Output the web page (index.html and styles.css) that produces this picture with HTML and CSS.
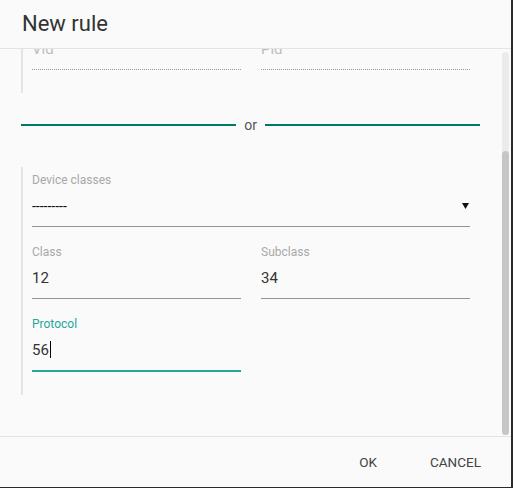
FILE: index.html
```html
<!DOCTYPE html>
<html lang="en">
<head>
  <meta charset="UTF-8">
  <meta name="viewport" content="width=device-width, initial-scale=1.0">
  <title>New rule</title>
  <link rel="stylesheet" href="styles.css">
</head>
<body>

  <div class="dialog">
    <h2 class="dialog-title">New rule</h2>

    <div class="dialog-content">
      <div class="dialog-body" id="dialogBody">
        <!-- Vendor / product -->
        <div class="rule-group">
          <div class="field">
            <label class="field-label">Device</label>
            <div class="select">
              <span>---------</span>
              <svg class="select-arrow" width="7" height="6" viewBox="0 0 7 6"><polygon points="0,0 7,0 3.5,6" fill="#111"/></svg>
            </div>
          </div>
          <div class="field-row">
            <div class="field disabled">
              <label class="field-label"></label>
              <input class="field-input" type="text" placeholder="Vid" disabled>
            </div>
            <div class="field disabled">
              <label class="field-label"></label>
              <input class="field-input" type="text" placeholder="Pid" disabled>
            </div>
          </div>
        </div>

        <div class="divider"><span>or</span></div>

        <!-- Device classes -->
        <div class="rule-group">
          <div class="field">
            <label class="field-label">Device classes</label>
            <div class="select">
              <span>---------</span>
              <svg class="select-arrow" width="7" height="6" viewBox="0 0 7 6"><polygon points="0,0 7,0 3.5,6" fill="#111"/></svg>
            </div>
          </div>
          <div class="field-row">
            <div class="field">
              <label class="field-label" for="cls">Class</label>
              <input class="field-input" id="cls" type="text" value="12">
            </div>
            <div class="field">
              <label class="field-label" for="subcls">Subclass</label>
              <input class="field-input" id="subcls" type="text" value="34">
            </div>
          </div>
          <div class="field-row">
            <div class="field focused">
              <label class="field-label">Protocol</label>
              <div class="field-input">56<span class="caret"></span></div>
            </div>
          </div>
        </div>
      </div>

      <div class="scrollbar">
        <div class="scrollbar-track" id="track">
          <div class="scrollbar-thumb" id="thumb"></div>
        </div>
      </div>
    </div>

    <div class="dialog-actions">
      <button class="text-btn">OK</button>
      <button class="text-btn">CANCEL</button>
    </div>
  </div>

  <script>
    document.addEventListener('DOMContentLoaded', () => {
      const body = document.getElementById('dialogBody');
      const track = document.getElementById('track');
      const thumb = document.getElementById('thumb');

      function updateThumb() {
        const trackHeight = track.clientHeight;
        thumb.style.height = (body.clientHeight / body.scrollHeight * trackHeight) + 'px';
        thumb.style.top = (body.scrollTop / body.scrollHeight * trackHeight) + 'px';
      }

      body.addEventListener('scroll', updateThumb);

      // keep the form scrolled to the bottom
      body.scrollTop = body.scrollHeight;
      updateThumb();
    });
  </script>
</body>
</html>
```

FILE: styles.css
```css
/* General Styles */
body {
  font-family: Roboto, "Liberation Sans", sans-serif;
  margin: 0;
  padding: 0;
  background-color: #2b2b2b;
  color: #333;
}

.dialog {
  width: 511px;
  height: 487px;
  background: #fafafa;
  display: flex;
  flex-direction: column;
}

.dialog-title {
  margin: 0;
  height: 48px;
  line-height: 48px;
  padding-left: 22px;
  font-size: 22px;
  font-weight: 400;
  color: #333;
  border-bottom: 1px solid #e3e3e3;
  flex-shrink: 0;
}

.dialog-content {
  display: flex;
  height: 387px;
  flex-shrink: 0;
}

.dialog-body {
  flex: 1;
  overflow-y: auto;
  scrollbar-width: none;
  padding: 24px 21px 41px 21px;
  box-sizing: border-box;
}

/* Scrollbar */
.scrollbar {
  width: 10px;
  padding: 3px 2px 1px 1px;
  box-sizing: border-box;
  flex-shrink: 0;
}

.scrollbar-track {
  position: relative;
  height: 100%;
  background: #ebebeb;
  border-radius: 4px;
}

.scrollbar-thumb {
  position: absolute;
  left: 0;
  right: 0;
  background: #c6c6c6;
  border-radius: 4px;
}

/* Rule groups */
.rule-group {
  border-left: 2px solid #e4e4e4;
  padding: 5px 10px 23px 9px;
}

.field-row {
  display: grid;
  grid-template-columns: 1fr 1fr;
  gap: 20px;
  margin-top: 17px;
}

.field {
  display: flex;
  flex-direction: column;
  border-bottom: 1px solid #949494;
  padding-bottom: 10px;
}

.field-label {
  display: block;
  height: 16px;
  line-height: 16px;
  font-size: 12px;
  color: #a8a8a8;
  margin-bottom: 8px;
}

.field-input {
  border: none;
  background: transparent;
  padding: 0;
  margin: 0;
  height: 20px;
  line-height: 20px;
  font-family: inherit;
  font-size: 15px;
  color: #333;
  outline: none;
  width: 100%;
}

.caret {
  display: inline-block;
  width: 1px;
  height: 17px;
  margin-left: 1px;
  background: #000;
  vertical-align: -3px;
}

.field.disabled {
  border-bottom: 1px dotted #9a9a9a;
}

.field.disabled .field-input::placeholder {
  color: #bdbdbd;
}

.field.focused {
  border-bottom: 2px solid #26a69a;
}

.field.focused .field-label {
  color: #26a69a;
}

.select {
  display: flex;
  justify-content: space-between;
  align-items: center;
  height: 20px;
  font-size: 14px;
  color: #111;
}

.select-arrow {
  margin-right: 1px;
}

/* "or" divider */
.divider {
  display: flex;
  align-items: center;
  gap: 8px;
  height: 20px;
  margin: 22px 0 32px;
  font-size: 14px;
  color: #555;
}

.divider::before,
.divider::after {
  content: "";
  flex: 1;
  height: 2px;
  background: #00796b;
}

/* Footer */
.dialog-actions {
  display: flex;
  justify-content: flex-end;
  align-items: center;
  gap: 22px;
  padding: 0 22px;
  height: 50px;
  border-top: 1px solid #e3e3e3;
  flex-shrink: 0;
}

.text-btn {
  min-width: 64px;
  padding: 0 8px;
  height: 36px;
  border: none;
  background: none;
  font-family: inherit;
  font-size: 13.5px;
  color: #444;
  cursor: pointer;
}
```
